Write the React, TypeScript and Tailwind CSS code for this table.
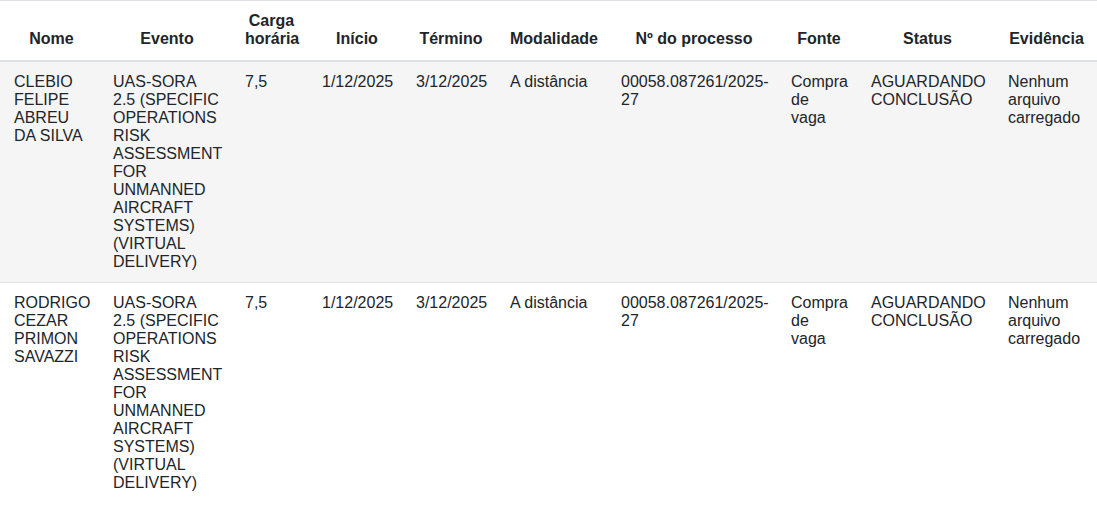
import React from "react";

type Row = {
  nome: string;
  evento: string;
  carga: string;
  inicio: string;
  termino: string;
  modalidade: string;
  processo: string;
  fonte: string;
  status: string;
  evidencia: string;
};

const evento =
  "UAS-SORA 2.5 (SPECIFIC OPERATIONS RISK ASSESSMENT FOR UNMANNED AIRCRAFT SYSTEMS) (VIRTUAL DELIVERY)";

const rows: Row[] = [
  {
    nome: "CLEBIO FELIPE ABREU DA SILVA",
    evento,
    carga: "7,5",
    inicio: "1/12/2025",
    termino: "3/12/2025",
    modalidade: "A distância",
    processo: "00058.087261/2025-27",
    fonte: "Compra de vaga",
    status: "AGUARDANDO CONCLUSÃO",
    evidencia: "Nenhum arquivo carregado",
  },
  {
    nome: "RODRIGO CEZAR PRIMON SAVAZZI",
    evento,
    carga: "7,5",
    inicio: "1/12/2025",
    termino: "3/12/2025",
    modalidade: "A distância",
    processo: "00058.087261/2025-27",
    fonte: "Compra de vaga",
    status: "AGUARDANDO CONCLUSÃO",
    evidencia: "Nenhum arquivo carregado",
  },
];

const headers = [
  "Nome",
  "Evento",
  "Carga horária",
  "Início",
  "Término",
  "Modalidade",
  "Nº do processo",
  "Fonte",
  "Status",
  "Evidência",
];

export default function App() {
  return (
    <div
      className="w-[1097px] h-[507px] bg-white text-[#212529] overflow-hidden"
      style={{ fontFamily: '"Liberation Sans", Arial, sans-serif' }}
    >
      <table className="w-[1097px] table-fixed border-collapse text-[16px] leading-[18px]">
        <colgroup>
          <col className="w-[101px]" />
          <col className="w-[132px]" />
          <col className="w-[77px]" />
          <col className="w-[94px]" />
          <col className="w-[94px]" />
          <col className="w-[111px]" />
          <col className="w-[170px]" />
          <col className="w-[80px]" />
          <col className="w-[137px]" />
          <col className="w-[101px]" />
        </colgroup>
        <thead>
          <tr className="border-t border-[#dee2e6] border-b-2">
            {headers.map((h, i) => (
              <th
                key={h}
                className={`align-bottom text-center font-bold pt-[11px] pb-[12px] pr-3 ${
                  i === 0 ? "pl-[14px]" : "pl-3"
                }`}
              >
                {h}
              </th>
            ))}
          </tr>
        </thead>
        <tbody>
          {rows.map((r, idx) => (
            <tr
              key={idx}
              className={`${idx === 0 ? "bg-[#f5f5f5]" : "bg-white border-t border-[#dee2e6]"}`}
            >
              {[
                r.nome,
                r.evento,
                r.carga,
                r.inicio,
                r.termino,
                r.modalidade,
                r.processo,
                r.fonte,
                r.status,
                r.evidencia,
              ].map((c, i) => (
                <td
                  key={i}
                  className={`align-top text-left py-[11px] pr-3 ${
                    i === 0 ? "pl-[14px]" : "pl-3"
                  }`}
                >
                  {c}
                </td>
              ))}
            </tr>
          ))}
        </tbody>
      </table>
    </div>
  );
}
